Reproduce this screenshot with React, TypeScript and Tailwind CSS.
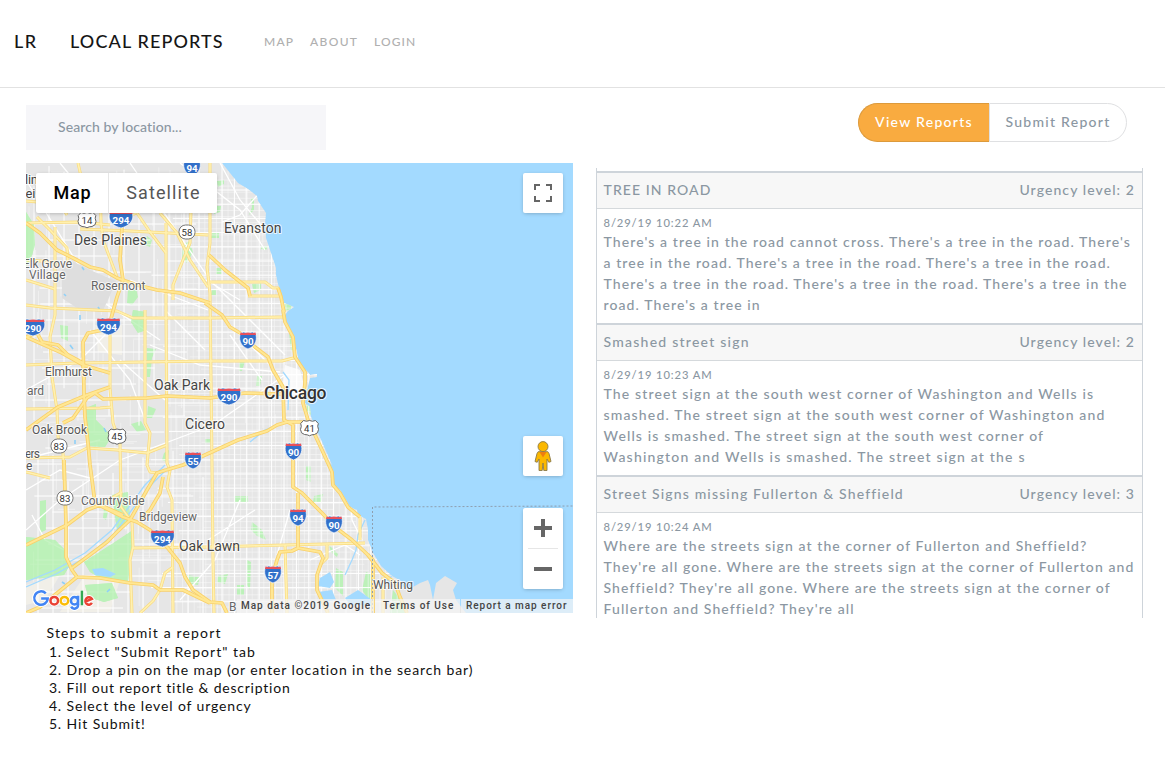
import React from "react";

/* ---------- map data (map units, origin at the page corner) ---------- */

const LAND =
  "M26 163L222 163L238 183L248 189L257 196L258 201L266 213L265 223L266 238L270 250L276 268L276 275L278 284L281 293L284 303L294 307L288 311L285 315L286 321L293 335L297 353L300 367L307 371L310 375L317 374L317 377L310 378L307 390L305 403L310 407L311 417L318 433L332 465L327 460L332 470L334 487L340 490L350 507L357 510L358 515L366 519L368 530L368 540L373 553L381 566L392 576L401 581L401 585L408 590L420 583L428 580L430 585L433 600L436 583L445 576L457 583L453 590L456 600L466 613L26 613Z";

const PARKS = [
  "M26 537L55 540L65 550L70 565L64 575L50 577L26 580Z",
  "M26 212L34 225L35 245L30 262L26 266Z",
  "M84 562L118 540L133 530L131 560L128 582L100 578L90 572Z",
  "M112 495L128 492L130 520L117 530Z",
  "M85 585L112 583L118 598L104 602L88 597Z",
  "M86 408L96 404L96 420L112 436L105 447L88 446Z",
  "M133 310L146 312L146 330L138 333L131 322Z",
  "M147 348L156 349L152 358L150 377L147 377Z",
  "M128 290L136 288L138 297L132 305L127 303Z",
  "M147 236L152 240L150 247L143 244Z",
  "M183 245L189 241L193 252L187 263L182 258Z",
  "M217 181L224 180L224 184L218 187Z",
  "M214 206L221 206L220 212L214 214Z",
  "M212 233L219 233L219 238L211 238Z",
  "M251 199L254 198L254 210L249 215L252 207Z",
  "M261 246L268 246L266 250L261 249Z",
  "M216 268L222 268L222 274L216 274Z",
  "M252 284L261 283L261 290L254 293Z",
  "M212 289L216 289L216 295L211 295Z",
  "M283 302L292 305L291 309L285 311Z",
  "M289 333L294 337L297 355L291 350Z",
  "M306 398L311 405L311 415L307 412Z",
  "M239 361L245 361L242 371L239 371Z",
  "M131 424L141 421L146 430L137 432Z",
  "M148 406L156 409L152 418L147 418Z",
  "M60 325L68 326L68 341L61 338Z",
  "M164 453L169 450L167 462L162 460Z",
  "M234 496L248 496L248 502L234 502Z",
  "M306 466L311 466L311 482L306 480Z",
  "M314 496L323 494L321 502L313 502Z",
  "M252 522L262 530L266 540L257 536L251 530Z",
  "M247 560L251 562L250 590L247 585Z",
  "M218 576L228 574L225 584L217 582Z",
  "M329 545L338 554L337 557L331 552Z",
  "M336 568L343 572L343 596L335 588Z",
  "M366 572L372 574L372 605L362 590Z",
  "M40 501L46 500L46 530L40 533Z",
  "M104 508L108 512L106 520L103 518Z",
  "M205 439L212 439L210 443L205 443Z",
  "M187 575L200 577L198 585L186 583Z",
  "M237 585L244 585L244 595L237 595Z",
  "M257 376L262 376L260 386L256 386Z",
  "M393 590L401 600L406 613L390 613Z",
];

const LOCAL_DIAGONALS =
  "M26 180L100 300L160 340M130 163L210 280L280 350M60 163L90 200M180 163L240 210L265 250M222 222L240 215L262 190M26 530L60 500L120 460L200 430M90 330L130 380L145 420M150 345L200 365L280 372M206 430L285 375M215 310L270 365M240 310L285 355M230 335L262 380M208 540L255 510M277 555L290 510M165 310L205 350M26 390L80 360L110 330M40 455L100 440M120 360L165 400M32 515L45 540L64 550M26 490L60 470L90 478M220 163L240 200L262 226M206 280L240 300M180 600L215 560L240 500M350 480L352 520L362 540M310 560L345 545L360 555M130 280L208 310";

const ARTERIALS = [
  "M55 227L55 315L50 337L52 377L57 410L58 437L63 453L64 480",
  "M100 180L101 223L103 240L117 277",
  "M166 223L166 310L167 463L170 470L167 487L172 500L173 613",
  "M145 310L145 423L150 433L147 465L150 472L157 473",
  "M210 163L210 243L207 267L210 293L212 465L213 560L214 613",
  "M26 201L60 204L67 215M26 223L80 222L110 225",
  "M80 229L130 231L208 235",
  "M37 217L50 230L67 248L68 262",
  "M137 213L150 232L166 253",
  "M160 213L177 233L190 260L208 287",
  "M192 175L190 243L183 260L173 285L173 300",
  "M26 305L50 308L117 311L133 318L210 318L283 317",
  "M26 365L77 363L210 361L282 361L297 357",
  "M110 320L110 388L113 423L120 443L121 507L132 522L133 547L130 560L132 613",
  "M26 409L100 408L112 407",
  "M26 458L70 457L87 448L117 450L147 453L167 445",
  "M133 548L210 547L285 545L365 543",
  "M210 282L265 282L273 288L278 288L281 296L248 296",
  "M100 505L122 492",
  "M140 613L153 601L160 590L165 573L173 567",
  "M285 545L287 613",
  "M327 545L327 558L320 565",
  "M383 577L383 613",
  "M360 517L360 540",
  "M26 280L55 289M27 260L57 262M120 222L150 205L166 190",
  "M26 472L50 478M78 163L83 185",
];

const HIGHWAYS = [
  "M26 223L40 233L57 250L73 258L90 267L103 270L117 278L137 285L157 290L180 293L210 303",
  "M122 213L122 227L120 260L123 280L117 297L112 315L108 329L88 333L83 342L84 393L85 417L88 443L90 465L92 480L95 503L123 517L137 522L150 530L167 547L180 563L185 577L193 590L210 602L222 603L227 613",
  "M209 255L225 270L248 288L250 296M205 303L222 315L230 327L240 333L255 347L268 357L273 370L283 387L284 420L293 425L293 487L302 493L322 513L335 527L352 540L368 555L382 573L395 583L400 597L407 613",
  "M26 337L37 333L42 342L58 345L68 355L83 363L84 380",
  "M26 337L60 352L83 365L110 373",
  "M26 430L58 407L87 395L110 387",
  "M63 423L73 418L87 398L95 393L103 399L147 398L167 396L210 398L245 393L283 394",
  "M166 470L183 465L205 455L238 440L267 431L277 425L287 422L305 422",
  "M166 470L157 473L147 490L130 520L117 532L107 542L87 557L72 568",
  "M163 477L160 493L150 510L140 520",
  "M64 460L66 523L66 557L72 570L77 577L100 578L130 583L153 585L160 590L183 590L210 603",
  "M26 545L67 525L87 510L100 505L123 515",
  "M77 577L40 607L26 613",
  "M298 493L298 548L292 551L280 552L277 560L272 577L272 613",
  "M298 548L320 552L323 558L317 575L317 590L328 613",
  "M283 310L285 322L293 337L295 357L305 372L305 383L303 403L308 420L322 450L332 472L333 485L340 493L348 507L360 517",
  "M368 555L373 560L373 613",
  "M278 288L281 297L284 312",
];

const STREETS = (() => {
  let seed = 11;
  const rnd = () => ((seed = (seed * 16807) % 2147483647) / 2147483647);
  let minor = "";
  let major = "";
  for (let x = 170; x < 400; x += 5.8) minor += `M${x} ${170 + rnd() * 60}V${380 + rnd() * 60}M${x + 1} ${400 + rnd() * 40}V613`;
  for (let y = 180; y < 613; y += 6.1) minor += `M${165 + rnd() * 40} ${y}H${330 + rnd() * 50}`;
  for (let i = 0; i < 120; i++) {
    const x = 28 + rnd() * 140;
    const y = 165 + rnd() * 430;
    if (i % 2) minor += `M${x} ${y}h${14 + rnd() * 45}`;
    else minor += `M${x} ${y}v${14 + rnd() * 40}`;
  }
  for (let x = 222; x < 380; x += 12.4) major += `M${x} 163V613`;
  for (let y = 190; y < 613; y += 14.2) major += `M${150 + rnd() * 30} ${y}H400`;
  for (let x = 34; x < 210; x += 15) major += `M${x} ${163 + rnd() * 50}V${350 + rnd() * 90}M${x + 4} ${440 + rnd() * 60}V613`;
  for (let y = 176; y < 613; y += 16) major += `M${26 + rnd() * 30} ${y}H${120 + rnd() * 90}`;
  return { minor, major };
})();

type Label = { t: string; x: number; y: number; s: number; w: number; c: string };
const LABELS: Label[] = [
  { t: "lin", x: 25, y: 184, s: 13, w: 13, c: "#444" },
  { t: "ei", x: 25.5, y: 197.5, s: 13, w: 10, c: "#444" },
  { t: "Des Plaines", x: 74, y: 245.4, s: 14, w: 73, c: "#444" },
  { t: "Evanston", x: 224, y: 233.4, s: 14, w: 57.5, c: "#444" },
  { t: "Elk Grove", x: 23, y: 267.5, s: 12, w: 49, c: "#666" },
  { t: "Village", x: 29, y: 279.3, s: 12, w: 36.5, c: "#666" },
  { t: "Rosemont", x: 91, y: 289.5, s: 12, w: 54.5, c: "#666" },
  { t: "Elmhurst", x: 45, y: 375.5, s: 12, w: 47, c: "#555" },
  { t: "ard", x: 27, y: 394.5, s: 12, w: 17, c: "#666" },
  { t: "Oak Park", x: 154, y: 390.3, s: 14, w: 56, c: "#444" },
  { t: "Chicago", x: 264, y: 398.5, s: 17.5, w: 62.5, c: "#333" },
  { t: "Cicero", x: 185, y: 429.4, s: 14, w: 40, c: "#444" },
  { t: "Oak Brook", x: 32, y: 433.6, s: 12, w: 55, c: "#555" },
  { t: "ers", x: 25, y: 457.6, s: 12, w: 15, c: "#555" },
  { t: "e", x: 26, y: 469.5, s: 12, w: 7, c: "#555" },
  { t: "Countryside", x: 81, y: 505.3, s: 12, w: 63.5, c: "#666" },
  { t: "Bridgeview", x: 139, y: 521.3, s: 12, w: 58, c: "#666" },
  { t: "Oak Lawn", x: 179, y: 551.3, s: 14, w: 61, c: "#444" },
  { t: "Whiting", x: 373, y: 589.3, s: 12, w: 40, c: "#555" },
  { t: "B", x: 229, y: 611, s: 12, w: 7, c: "#666" },
];

const INTERSTATES: [string, number, number][] = [
  ["94", 192, 167], ["294", 121, 219], ["290", 33, 327], ["294", 108.5, 326], ["90", 248, 340],
  ["290", 229, 396], ["90", 293.5, 451], ["55", 193, 460], ["94", 298, 517], ["90", 334, 524],
  ["294", 162.5, 538], ["57", 273, 574],
];

const ROUTES: [string, number, number, boolean][] = [
  ["14", 87, 220, true], ["58", 187, 232, false], ["41", 309.5, 428, true], ["45", 117, 436.5, true],
  ["83", 59, 446, false], ["83", 65, 498, false],
];

function Interstate({ n, x, y }: { n: string; x: number; y: number }) {
  const w = n.length > 2 ? 12 : 8.5;
  return (
    <g transform={`translate(${x} ${y})`}>
      <path
        d={`M${-w + 1} -7L${-w / 2} -8L0 -7L${w / 2} -8L${w - 1} -7C${w + 1} -2 ${w} 6 0 9C${-w} 6 ${-w - 1} -2 ${-w + 1} -7Z`}
        fill="#3270ca" stroke="#fff" strokeWidth="0.7"
      />
      <path d={`M${-w + 1} -7.5L${-w / 2} -6.8L0 -7.5L${w / 2} -6.8L${w - 1} -7.5L${w - 0.5} -5H${-w + 0.5}Z`} fill="#e8505b" />
      <text y="4.6" textAnchor="middle" fontSize="9.8" fontWeight="700" fill="#fff">{n}</text>
    </g>
  );
}

function RouteSign({ n, x, y, us }: { n: string; x: number; y: number; us: boolean }) {
  return (
    <g transform={`translate(${x} ${y})`}>
      {us ? (
        <path
          d="M-6 -7.5Q-3 -6 0 -7.5Q3 -6 6 -7.5L8.8 -4.5Q7.5 -2 9 1.5Q9 5.5 5 6.5Q2 6.5 0 7.8Q-2 6.5 -5 6.5Q-9 5.5 -9 1.5Q-7.5 -2 -8.8 -4.5Z"
          fill="#fff" stroke="#666" strokeWidth="1"
        />
      ) : (
        <rect x="-8" y="-7" width="16" height="14" rx="6.6" fill="#fff" stroke="#777" strokeWidth="1" />
      )}
      <text y="3.5" textAnchor="middle" fontSize="9.6" fontWeight="400" fill="#333">{n}</text>
    </g>
  );
}

function MapDrawing() {
  return (
    <svg className="block h-[450px] w-[547px] font-[Roboto]" viewBox="26 163 547 450">
      <defs>
        <clipPath id="land"><path d={LAND} /></clipPath>
      </defs>
      <rect x="26" y="163" width="547" height="450" fill="#a3daff" />
      <path d={LAND} fill="#e6e6e6" />
      <g clipPath="url(#land)">
        <path d="M95 325L122 325L122 355L98 352ZM26 585L60 575L45 600L26 605ZM85 575L120 580L110 612L60 612Z" fill="#f1efe8" />
        {PARKS.map((d) => <path key={d} d={d} fill="#bcf1b9" />)}
        <path d={STREETS.minor} stroke="#f6f6f6" strokeWidth="0.6" fill="none" />
        <path d={STREETS.major} stroke="#fff" strokeWidth="1" fill="none" />
        <path d={LOCAL_DIAGONALS} stroke="#fff" strokeWidth="1.3" fill="none" />
        {PARKS.slice(0, 7).map((d) => <path key={d} d={d} fill="#bcf1b9" fillOpacity="0.85" />)}
        <path d="M62 268L74 262L90 270L116 281L108 300L102 312L80 310L62 298Z" fill="#dedede" />
        <path d="M285 365L300 370L304 385L302 396L287 400L283 385Z" fill="#fff" fillOpacity="0.75" />
        <path
          d="M165 465L145 485L112 530L85 553L55 570L26 582M168 468L148 488L114 534L88 556L56 574L26 587M285 422L265 430L250 442M288 410L289 380L283 372M352 560L356 550L358 535L365 520M345 575L352 560"
          stroke="#a3daff" strokeWidth="1.3" fill="none"
        />
        <path d="M92 569L103 568L116 574L110 577L95 575Z" fill="#a3daff" />
        <path d="M320 578L330 572L334 582L330 588L318 586ZM318 592L332 590L336 600L322 602ZM345 598L358 590L372 600L370 605L350 605ZM385 578L392 576L390 584Z" fill="#a3daff" />
        <path d="M82 267l2 3M64 294l2 2M98 307l2 3M80 315v5M70 345l3 4M104 428l2 4M75 440v4M62 582l3 2M110 589l-3 3" stroke="#8fd0f8" strokeWidth="1.6" />
      </g>
      <g fill="none" strokeLinejoin="round">
        {ARTERIALS.map((d) => <path key={d} d={d} stroke="#fadb80" strokeWidth="3" />)}
        {ARTERIALS.map((d) => <path key={d} d={d} stroke="#fff1b0" strokeWidth="1.6" />)}
        {HIGHWAYS.map((d) => <path key={d} d={d} stroke="#f9d06a" strokeWidth="3.7" />)}
        {HIGHWAYS.map((d) => <path key={d} d={d} stroke="#ffe793" strokeWidth="2" />)}
        <path d="M372.5 613V507L573 506" stroke="#8f9fb0" strokeWidth="1" strokeDasharray="2 2" />
      </g>
      {INTERSTATES.map(([n, x, y]) => <Interstate key={`${x}-${y}`} n={n} x={x} y={y} />)}
      {ROUTES.map(([n, x, y, us]) => <RouteSign key={`${x}-${y}`} n={n} x={x} y={y} us={us} />)}
      {LABELS.map((l) => (
        <text
          key={l.t + l.y} x={l.x} y={l.y} fontSize={l.s} textLength={l.w} fill={l.c}
          fontWeight={l.t === "Chicago" ? 500 : 400}
          stroke="#fff" strokeOpacity="0.75" strokeWidth="2" strokeLinejoin="round" paintOrder="stroke"
        >
          {l.t}
        </text>
      ))}
    </svg>
  );
}

function GoogleLogo() {
  return (
    <svg className="block h-[25px] w-[65px]" viewBox="0 0 66 26" fill="none">
      {[["#fff", 4.6], ["", 2.6]].map(([halo, w]) => (
        <g key={w} strokeWidth={w as number}>
          <path d="M15.6 6.6A7 7 0 1 0 17.6 12H10.8" stroke={(halo as string) || "#4285f4"} />
          <circle cx="24.4" cy="14.2" r="3.9" stroke={(halo as string) || "#ea4335"} />
          <circle cx="35" cy="14.2" r="3.9" stroke={(halo as string) || "#fbbc05"} />
          <path d="M49.2 9.2V18.6A3.8 3.8 0 0 1 42 20.4M49.2 14.2A3.7 3.9 0 1 1 41.8 14.2A3.7 3.9 0 1 1 49.2 14.2" stroke={(halo as string) || "#4285f4"} />
          <path d="M53.2 3.8V19" stroke={(halo as string) || "#34a853"} />
          <path d="M56.8 15.2L63.6 12.4A3.7 3.9 0 1 0 63.6 16.6" stroke={(halo as string) || "#ea4335"} />
        </g>
      ))}
    </svg>
  );
}

function Pegman() {
  return (
    <svg className="mr-[1px] block h-[32px] w-[20px]" viewBox="0 0 20 32">
      <path
        d="M5.2 11.7H14.8L16 13.5L18 21.5L15.8 22.3L14 19V30.5H10.8L10 23L9.2 30.5H6V19L4.2 22.3L2 21.5L4 13.5Z"
        fill="#fbb800" stroke="#8b7b4a" strokeWidth="0.9"
      />
      <path d="M6.5 12L13.5 12L10 17.5Z" fill="#ee7d10" />
      <circle cx="10" cy="6.6" r="5" fill="#fbb800" stroke="#8b7b4a" strokeWidth="0.9" />
    </svg>
  );
}

const CONTROL = "flex items-center justify-center bg-white shadow-[0_1px_4px_-1px_rgba(0,0,0,0.3)]";

function MapPanel() {
  return (
    <div className="relative h-[450px] w-[547px] overflow-hidden">
      <MapDrawing />
      <div className="absolute top-[10px] left-[10px] flex h-10 rounded-[2px] bg-white font-[Roboto] text-[18px] shadow-[0_1px_4px_-1px_rgba(0,0,0,0.3)]">
        <div className="flex w-[73px] items-center justify-center border-r border-[#e6e6e6] pb-[2px] pl-px font-medium tracking-[0.85px] text-black">Map</div>
        <div className="flex w-[108px] items-center justify-center pb-[2px] pl-px font-normal tracking-[1.1px] text-[#565656]">Satellite</div>
      </div>
      <div className={`${CONTROL} absolute top-[10px] right-[10px] size-10 rounded-[2px]`}>
        <svg className="size-[18px]" viewBox="0 0 18 18" fill="#666">
          <path d="M0 0H6V2H2V6H0ZM12 0H18V6H16V2H12ZM0 12H2V16H6V18H0ZM16 12H18V18H12V16H16Z" />
        </svg>
      </div>
      <div className={`${CONTROL} absolute top-[273px] right-[10px] size-10 rounded-[2px]`}>
        <Pegman />
      </div>
      <div className={`${CONTROL} absolute top-[345px] right-[10px] h-[81px] w-10 flex-col rounded-[2px]`}>
        <div className="flex h-10 items-center">
          <svg className="size-[18px]" viewBox="0 0 18 18" fill="#666"><path d="M7 0H11V7H18V11H11V18H7V11H0V7H7Z" /></svg>
        </div>
        <div className="h-px w-[30px] bg-[#e6e6e6]" />
        <div className="flex h-10 items-center">
          <svg className="size-[18px]" viewBox="0 0 18 18" fill="#666"><path d="M0 7H18V11H0Z" /></svg>
        </div>
      </div>
      <div className="absolute bottom-[1px] left-[4px]"><GoogleLogo /></div>
      <div className="absolute right-0 bottom-0 flex h-[14px] gap-px font-[Roboto] text-[10px] leading-[14px] font-medium whitespace-nowrap text-[#444]">
        <div className="w-[137px] bg-[#f5f5f5]/70 pl-[4px] tracking-[0.99px]">Map data ©2019 Google</div>
        <div className="w-[85px] bg-[#f5f5f5]/70 pl-[8px] tracking-[0.97px]">Terms of Use</div>
        <div className="w-[112px] bg-[#f5f5f5]/70 pl-[5px] tracking-[0.96px]">Report a map error</div>
      </div>
    </div>
  );
}

/* ---------- reports ---------- */

type Run = { t: string; k: string };
type Report = { title: Run; urgency: string; date: string; lines: Run[] };

const REPORTS: Report[] = [
  {
    title: { t: "TREE IN ROAD", k: "tracking-[1.08px]" },
    urgency: "Urgency level: 2",
    date: "8/29/19 10:22 AM",
    lines: [
      { t: "There's a tree in the road cannot cross. There's a tree in the road. There's", k: "tracking-[1.098px]" },
      { t: "a tree in the road. There's a tree in the road. There's a tree in the road.", k: "tracking-[1.07px]" },
      { t: "There's a tree in the road. There's a tree in the road. There's a tree in the", k: "tracking-[1.085px]" },
      { t: "road. There's a tree in", k: "tracking-[1.1px]" },
    ],
  },
  {
    title: { t: "Smashed street sign", k: "tracking-[1.24px]" },
    urgency: "Urgency level: 2",
    date: "8/29/19 10:23 AM",
    lines: [
      { t: "The street sign at the south west corner of Washington and Wells is", k: "tracking-[1.135px]" },
      { t: "smashed. The street sign at the south west corner of Washington and", k: "tracking-[1.155px]" },
      { t: "Wells is smashed. The street sign at the south west corner of", k: "tracking-[1.13px]" },
      { t: "Washington and Wells is smashed. The street sign at the s", k: "tracking-[1.19px]" },
    ],
  },
  {
    title: { t: "Street Signs missing Fullerton & Sheffield", k: "tracking-[1.14px]" },
    urgency: "Urgency level: 3",
    date: "8/29/19 10:24 AM",
    lines: [
      { t: "Where are the streets sign at the corner of Fullerton and Sheffield?", k: "tracking-[1.08px]" },
      { t: "They're all gone. Where are the streets sign at the corner of Fullerton and", k: "tracking-[1.085px]" },
      { t: "Sheffield? They're all gone. Where are the streets sign at the corner of", k: "tracking-[1.09px]" },
      { t: "Fullerton and Sheffield? They're all", k: "tracking-[1.09px]" },
    ],
  },
];

function ReportCard({ r }: { r: Report }) {
  return (
    <article className="h-[152px] border-t-2 border-[#ced4da] whitespace-nowrap">
      <header className="flex h-9 items-center justify-between border-b border-[#d5d9dc] bg-[#f7f7f7] pr-[7px] pb-[2px] pl-[6.5px]">
        <h3 className={r.title.k}>{r.title.t}</h3>
        <span className="tracking-[1.08px]">{r.urgency}</span>
      </header>
      <div className="pt-[6px] pl-[6.5px]">
        <p className="h-4 text-[11.2px] leading-4 tracking-[0.89px]">{r.date}</p>
        {r.lines.map((l) => (
          <p key={l.t} className={`${l.k} h-[21px] leading-[21px]`}>{l.t}</p>
        ))}
      </div>
    </article>
  );
}

const STEPS: Run[] = [
  { t: 'Select "Submit Report" tab', k: "tracking-[1.02px]" },
  { t: "Drop a pin on the map (or enter location in the search bar)", k: "tracking-[0.895px]" },
  { t: "Fill out report title & description", k: "tracking-[0.77px]" },
  { t: "Select the level of urgency", k: "tracking-[0.87px]" },
  { t: "Hit Submit!", k: "tracking-[0.9px]" },
];

export default function App() {
  return (
    <div className="h-[759px] w-[1165px] overflow-hidden bg-white font-[Lato,sans-serif] text-[14px] font-medium text-[#8b97a2]">
      <nav className="flex h-[88px] items-center border-b border-[#e2e2e2] pb-[3px] pl-[14px] whitespace-nowrap text-[#161616]">
        <span className="w-[56px] pb-[2px] text-[18px] tracking-[1.5px]">LR</span>
        <span className="w-[194px] pb-[2px] text-[18px] tracking-[1.12px]">LOCAL REPORTS</span>
        <div className="flex text-[12px] text-[#b0b0b0]">
          <a className="w-[46px] tracking-[1.2px]">MAP</a>
          <a className="w-[64px] tracking-[1.35px]">ABOUT</a>
          <a className="tracking-[1.1px]">LOGIN</a>
        </div>
      </nav>

      <main className="flex">
        <section className="w-[596px] pt-[17px] pl-[26px]">
          <div className="flex h-[45px] w-[300px] items-center bg-[#f6f6f9] pb-[2px] pl-8 tracking-[0.08px]">Search by location...</div>
          <div className="pt-[13px]"><MapPanel /></div>
          <div className="pt-[11px] pl-[20.5px] leading-[18px] font-normal text-[#111]">
            <p className="h-[19px] leading-[17px] tracking-[1.15px]">Steps to submit a report</p>
            <ol>
              {STEPS.map((s, i) => (
                <li key={s.t} className="flex">
                  <span className="w-[20px] pl-[2.5px] tracking-[0.6px]">{i + 1}.</span>
                  <span className={s.k}>{s.t}</span>
                </li>
              ))}
            </ol>
          </div>
        </section>

        <section className="w-[547px] pt-[15px]">
          <div className="flex justify-end pr-4 tracking-[1.28px]">
            <button className="h-[39px] w-[131px] rounded-l-[20px] border border-r-0 border-[#dc9a3c] bg-[#f9ab40] pb-[2px] text-white">View Reports</button>
            <button className="h-[39px] w-[138px] rounded-r-[20px] border border-[#dfe0e2] bg-white pb-[2px]">Submit Report</button>
          </div>
          <div className="mt-[26px] h-[450px] overflow-hidden border-x border-[#ced4da] pt-[3px]">
            {REPORTS.map((r) => <ReportCard key={r.date} r={r} />)}
          </div>
        </section>
      </main>
    </div>
  );
}
